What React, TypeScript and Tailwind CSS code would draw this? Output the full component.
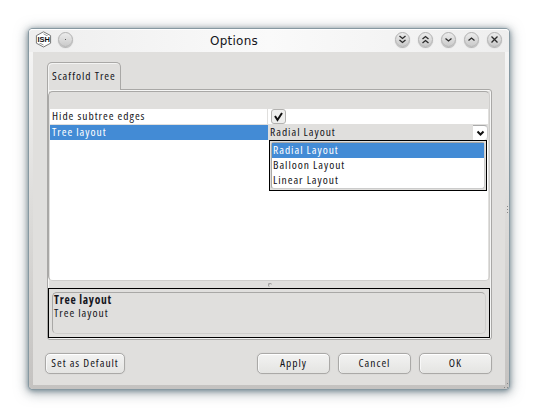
import type { ReactNode } from "react";

function TitleButton({ children }: { children: ReactNode }) {
  return (
    <span className="flex h-[15px] w-[15px] items-center justify-center rounded-full border border-[#b2b2b2] bg-linear-to-b from-[#ececec] to-[#cbcbcb] shadow-[0_1px_1px_#b0b0b0]">
      <svg width="13" height="13" viewBox="0 0 13 13" fill="none" stroke="#2b2b2b" strokeWidth="1.3">
        {children}
      </svg>
    </span>
  );
}

function Button({ label, className }: { label: string; className: string }) {
  return (
    <button
      className={`flex h-[21px] items-center justify-center rounded-[5px] border border-[#aaa9a7] bg-linear-to-b from-[#f3f3f2] to-[#e4e4e2] pb-[2px] shadow-[inset_0_1px_0_#fff,inset_1px_0_0_#f8f8f8,0_0_1px_#bbb] ${className}`}
    >
      <span className="whitespace-nowrap">{label}</span>
    </button>
  );
}

export default function App() {
  return (
    <div className="h-[418px] w-[538px] overflow-hidden bg-white pt-[29px] pl-[29px] font-['Open_Sans','Noto_Sans',sans-serif] text-[11.5px] leading-[15px] tracking-[0.97px] text-[#151520] [font-stretch:75%]">
      <div className="h-[360px] w-[480px] rounded-[4px] bg-linear-to-b from-[#f8f8f8] via-[#dddcda] to-[#c4c2c0] px-1 pb-1 shadow-[0_0_0_1px_#8799a2,0_1px_5px_1px_#607984cc,0_2px_12px_3px_#7b858a88]">
        <header className="-mx-1 flex h-[23px] items-center rounded-t-[4px] border-t border-white bg-linear-to-r from-[#eeeeee] via-[#fafafa] to-[#eeeeee] pr-[7px] pb-[3px] pl-[6px]">
          <svg width="17" height="17" viewBox="0 0 17 17">
            <path d="M8.5 .8 15.6 4.6V12.2L8.5 16 1.4 12.2V4.6Z" fill="#fff" stroke="#777" />
            <path d="M8.5 2.8 13.6 5.6M8.5 14 3.4 11.3" stroke="#999" fill="none" />
            <rect x="2.5" y="5" width="12" height="7" fill="#fff" />
            <text x="2.5" y="11.3" fontSize="8" fontWeight="700" fontFamily="Liberation Sans, sans-serif" textLength="12.5" lengthAdjust="spacingAndGlyphs" letterSpacing="0" fill="#111">ISH</text>
          </svg>
          <span className="ml-[6px] flex">
            <TitleButton><circle cx="6.5" cy="6.5" r=".5" fill="#333" stroke="none" /></TitleButton>
          </span>
          <h1 className="ml-[137px] w-[52px] pt-[3px] font-['DejaVu_Sans',sans-serif] text-[12px] tracking-[0.25px] whitespace-nowrap [font-stretch:100%]">Options</h1>
          <div className="ml-auto flex gap-2">
            <TitleButton><path d="m3.5 3 3 2.5 3-2.5M3.5 7l3 2.5 3-2.5" /></TitleButton>
            <TitleButton><path d="m3.5 6 3-2.5 3 2.5M3.5 10l3-2.5 3 2.5" /></TitleButton>
            <TitleButton><path d="m3.5 5.5 3 2.5 3-2.5" /></TitleButton>
            <TitleButton><path d="m3.5 7.5 3-2.5 3 2.5" /></TitleButton>
            <TitleButton><path d="m3.5 3.5 6 6m0-6-6 6" /></TitleButton>
          </div>
        </header>

        <main className="relative h-[333px] bg-[#e0dfdd] pt-[10px] pl-[14px]">
          <div className="relative z-10 -mb-[1px] h-[28px] w-[74px] rounded-t-[5px] border border-b-0 border-[#a9a8a6] bg-[#e0dfdd] pt-[5px] pl-[4px] shadow-[inset_1px_1px_0_#f4f4f3]">
            <span className="whitespace-nowrap">Scaffold Tree</span>
          </div>
          <section className="h-[251px] w-[445px] rounded-[3px] rounded-tl-none border border-[#a9a8a6] pt-[1px] shadow-[inset_0_0_0_1px_#f6f6f5]">
            <div className="h-[190px] w-[442px] overflow-hidden rounded-[5px] border border-[#a9a8a6] border-r-[#cfcecc] border-b-[#cfcecc] bg-[#e0dfdd] px-px">
              <div className="h-[17px]" />
              <div className="h-[171px] bg-white">
                <div className="flex h-[16px] border-b border-[#e0dfdd]">
                  <span className="w-[218px] border-r border-[#e0dfdd] pl-[2px] leading-[14px]">Hide subtree edges</span>
                  <span className="pl-[3px]">
                    <span className="flex h-[15px] w-[15px] items-center justify-center rounded-[3px] border border-[#b3b2b0] bg-[#efefee]">
                      <svg width="11" height="11" viewBox="0 0 11 11" fill="none" stroke="#111" strokeWidth="2"><path d="m2 5 2.5 4L9 2" /></svg>
                    </span>
                  </span>
                </div>
                <div className="flex h-[15px] bg-[#e0dfdd] leading-[14px]">
                  <span className="w-[218px] bg-[#438bd5] pl-[2px] text-white">Tree layout</span>
                  <span className="pl-[2px]">Radial Layout</span>
                  <span className="ml-auto flex w-[15px] items-center justify-center rounded-r-[4px] border-t border-r border-t-[#aaa] border-r-[#ccc] bg-white">
                    <svg width="9" height="7" viewBox="0 0 9 7" fill="none" stroke="#111" strokeWidth="2"><path d="m1.5 1.5 3 3 3-3" /></svg>
                  </span>
                </div>
              </div>
            </div>
            <div className="flex h-[7px] justify-center pt-[2px]">
              <span className="h-[4px] w-[4px] rounded-full border-t border-l border-[#999]" />
            </div>
            <div className="h-[50px] w-[442px] border border-black px-[3px] pt-[3px]">
              <div className="h-[42px] rounded-[5px] border border-[#a9a8a6] border-r-[#cfcecc] border-b-[#cfcecc] pl-px leading-[13px]">
                <p className="font-bold tracking-[0.75px]">Tree layout</p>
                <p>Tree layout</p>
              </div>
            </div>
          </section>
          <div className="mt-[13px] -ml-[2px] flex gap-2">
            <Button label="Set as Default" className="w-[80px]" />
            <Button label="Apply" className="ml-[124px] w-[73px]" />
            <Button label="Cancel" className="w-[73px]" />
            <Button label="OK" className="w-[73px]" />
          </div>
          <ul className="absolute top-[88px] left-[236px] z-20 h-[51px] w-[218px] border border-black bg-[#e0dfdd] p-px">
            <li className="h-[47px] rounded-[3px] border border-[#a9a8a6] border-r-[#ccc] border-b-[#ccc] bg-white leading-[14px]">
              <p className="h-[15px] bg-[#438bd5] pl-[1px] text-white">Radial Layout</p>
              <p className="h-[15px] pl-[1px]">Balloon Layout</p>
              <p className="h-[15px] pl-[1px]">Linear Layout</p>
            </li>
          </ul>
        </main>
      </div>
      <svg className="absolute top-[203px] left-[503px]" width="6" height="187" fill="#888">
        <path d="M4 3h1v1H4zM4 6h1v1H4zM4 9h1v1H4zM4 180h1v1H4zM1 184h1v1H1zM4 184h1v1H4z" />
      </svg>
    </div>
  );
}
